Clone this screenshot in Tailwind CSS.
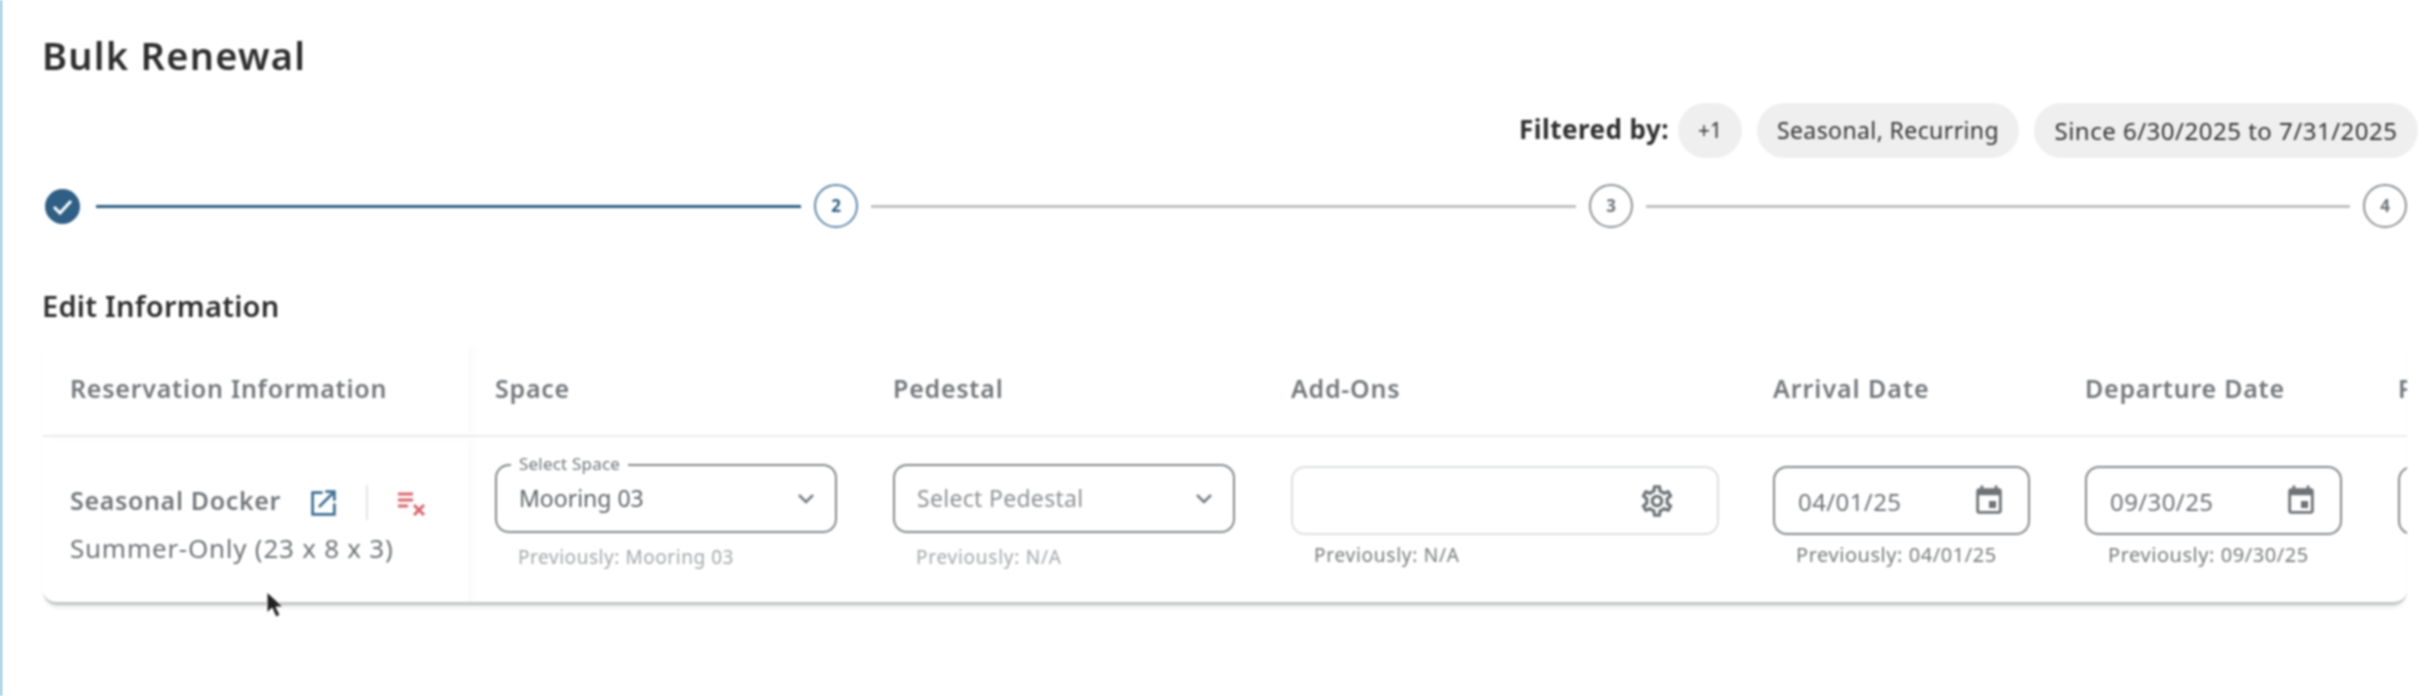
<!DOCTYPE html>
<html lang="en">
<head>
    <meta charset="UTF-8" />
    <title>Bulk Renewal</title>
    <script src="https://cdn.jsdelivr.net/npm/@tailwindcss/browser@4"></script>
</head>
<body class="bg-white overflow-hidden h-[696px] font-['Noto_Sans',sans-serif]">

<div class="relative h-[696px] border-l-2 border-[#7fbcdb] blur-[0.8px]">

    <h1 class="pl-[40px] pt-[30px] h-[103px] text-[38px] leading-[50px] font-semibold tracking-[1.25px] text-[#2e2e2e]">Bulk Renewal</h1>

    <div class="flex items-center justify-end h-[55px] pr-[8px]">
        <span class="text-[26px] font-bold text-[#2e2e2e] tracking-[0.45px] mr-[9px] -mt-[3px]">Filtered by:</span>
        <span class="flex items-center justify-center w-[64px] h-[55px] rounded-full bg-[#efefef] text-[21px] text-[#333] mr-[15px]">+1</span>
        <span class="flex items-center justify-center w-[262px] h-[55px] rounded-full bg-[#efefef] text-[23px] tracking-[0.4px] text-[#333] mr-[15px]">Seasonal, Recurring</span>
        <span class="flex items-center justify-center w-[384px] h-[55px] rounded-full bg-[#efefef] text-[24px] tracking-[0.5px] text-[#333]">Since 6/30/2025 to 7/31/2025</span>
    </div>

    <div class="flex items-center gap-[13px] pl-[43px] mt-[26px] h-[44px]">
        <svg class="w-[35px] h-[35px] mr-[3px]" viewBox="0 0 35 35">
            <circle cx="17.5" cy="17.5" r="17.5" fill="#2f5f85" />
            <path d="M9 18l6 6 11-12" fill="none" stroke="#fff" stroke-width="3" />
        </svg>
        <div class="w-[705px] h-[3px] bg-[#2f5f85]"></div>
        <div class="flex items-center justify-center w-[44px] h-[44px] rounded-full border-2 border-[#5f88a6] text-[17px] font-bold text-[#2f5f85]">2</div>
        <div class="w-[705px] h-[3px] bg-[#c0c0c0]"></div>
        <div class="flex items-center justify-center w-[44px] h-[44px] rounded-full border-2 border-[#8d9094] text-[17px] font-bold text-[#6f7376]">3</div>
        <div class="w-[704px] h-[3px] bg-[#c0c0c0]"></div>
        <div class="flex items-center justify-center w-[44px] h-[44px] rounded-full border-2 border-[#8d9094] text-[17px] font-bold text-[#6f7376]">4</div>
    </div>

    <h2 class="pl-[40px] mt-[60px] h-[57px] text-[29px] leading-[36px] font-semibold tracking-[0.25px] text-[#2e2e2e]">Edit Information</h2>

    <div class="ml-[41px] w-[2364px] h-[260px] overflow-hidden rounded-b-[14px] border-b-[3px] border-[#c4c6c7] shadow-[0_4px_4px_-2px_rgba(0,0,0,0.1)] grid grid-cols-[425px_398px_398px_482px_312px_313px_36px] grid-rows-[92px_167px]">
        <div class="flex items-center pl-[27px] pb-[3px] border-b-2 border-[#ececec] shadow-[5px_0_10px_rgba(0,0,0,0.025)] text-[25px] font-semibold text-[#74787b] tracking-[0.75px]">Reservation Information</div>
        <div class="flex items-center pl-[27px] pb-[3px] border-b-2 border-[#ececec] text-[25px] font-semibold text-[#74787b] tracking-[0.75px]">Space</div>
        <div class="flex items-center pl-[27px] pb-[3px] border-b-2 border-[#ececec] text-[25px] font-semibold text-[#74787b] tracking-[0.75px]">Pedestal</div>
        <div class="flex items-center pl-[27px] pb-[3px] border-b-2 border-[#ececec] text-[25px] font-semibold text-[#74787b] tracking-[0.75px]">Add-Ons</div>
        <div class="flex items-center pl-[27px] pb-[3px] border-b-2 border-[#ececec] text-[25px] font-semibold text-[#74787b] tracking-[0.95px]">Arrival Date</div>
        <div class="flex items-center pl-[27px] pb-[3px] border-b-2 border-[#ececec] text-[25px] font-semibold text-[#74787b] tracking-[0.75px]">Departure Date</div>
        <div class="flex items-center pl-[27px] pb-[3px] border-b-2 border-[#ececec] text-[25px] font-semibold text-[#74787b] overflow-hidden">Price</div>

        <div class="pl-[27px] pt-[45px] shadow-[5px_0_10px_rgba(0,0,0,0.025)]">
            <div class="flex items-center h-[38px]">
                <span class="text-[25px] font-semibold text-[#74787b] tracking-[0.65px]">Seasonal Docker</span>
                <svg class="ml-[28px] mt-[3px] w-[29px] h-[29px]" viewBox="0 0 32 32" fill="none" stroke="#3f6f94" stroke-width="3">
                    <path d="M15 5H4v24h24V17" />
                    <path d="M11 21L27 5M18 4h10v10" />
                </svg>
                <div class="ml-[28px] mt-[3px] w-[2px] h-[35px] bg-[#e4e4e4]"></div>
                <svg class="ml-[29px] mt-[6px] w-[30px] h-[24px]" viewBox="0 0 30 24" fill="none" stroke="#d9666c" stroke-width="3">
                    <path d="M1 2h15M1 8h15M1 14h10" />
                    <path d="M17 13l10 10M27 13L17 23" />
                </svg>
            </div>
            <div class="mt-[9px] text-[26px] text-[#6f7376] tracking-[0.75px]">Summer-Only (23 x 8 x 3)</div>
        </div>

        <div class="pl-[27px] pt-[27px]">
            <div class="relative flex items-center justify-between w-[342px] h-[69px] pl-[22px] pr-[23px] border-2 border-[#85888a] rounded-[14px]">
                <span class="absolute left-[14px] top-[-13px] bg-white px-[8px] text-[17px] leading-[22px] tracking-[0.2px] text-[#6f7376]">Select Space</span>
                <span class="text-[23px] text-[#5f6366]">Mooring 03</span>
                <svg class="w-[20px] h-[12px] -mr-[4px]" viewBox="0 0 20 12" fill="none" stroke="#777b7e" stroke-width="2.5"><path d="M3 2l7 7 7-7" /></svg>
            </div>
            <div class="pl-[23px] mt-[12px] text-[19px] leading-[24px] text-[#a3a6a8] tracking-[0.55px]">Previously: Mooring 03</div>
        </div>

        <div class="pl-[27px] pt-[27px]">
            <div class="flex items-center justify-between w-[342px] h-[69px] pl-[22px] pr-[23px] border-2 border-[#85888a] rounded-[14px]">
                <span class="text-[23px] tracking-[0.3px] text-[#8e9193]">Select Pedestal</span>
                <svg class="w-[20px] h-[12px] -mr-[4px]" viewBox="0 0 20 12" fill="none" stroke="#777b7e" stroke-width="2.5"><path d="M3 2l7 7 7-7" /></svg>
            </div>
            <div class="pl-[23px] mt-[12px] text-[19px] leading-[24px] text-[#a3a6a8] tracking-[0.75px]">Previously: N/A</div>
        </div>

        <div class="pl-[27px] pt-[29px]">
            <div class="flex items-center justify-end w-[428px] h-[69px] pr-[41px] border-2 border-[#dedfe0] rounded-[14px]">
                <svg class="w-[38px] h-[38px]" viewBox="0 0 24 24" fill="#6f7376">
                    <path d="M19.43 12.98c.04-.32.07-.64.07-.98 0-.34-.03-.66-.07-.98l2.11-1.65c.19-.15.24-.42.12-.64l-2-3.46c-.09-.16-.26-.25-.44-.25-.06 0-.12.01-.17.03l-2.49 1c-.52-.4-1.08-.73-1.69-.98l-.38-2.65C14.46 2.18 14.25 2 14 2h-4c-.25 0-.46.18-.49.42l-.38 2.65c-.61.25-1.17.59-1.69.98l-2.49-1c-.06-.02-.12-.03-.18-.03-.17 0-.34.09-.43.25l-2 3.46c-.13.22-.07.49.12.64l2.11 1.65c-.04.32-.07.65-.07.98 0 .33.03.66.07.98l-2.11 1.65c-.19.15-.24.42-.12.64l2 3.46c.09.16.26.25.44.25.06 0 .12-.01.17-.03l2.49-1c.52.4 1.08.73 1.69.98l.38 2.65c.03.24.24.42.49.42h4c.25 0 .46-.18.49-.42l.38-2.65c.61-.25 1.17-.59 1.69-.98l2.49 1c.06.02.12.03.18.03.17 0 .34-.09.43-.25l2-3.46c.12-.22.07-.49-.12-.64l-2.11-1.65zm-1.98-1.71c.04.31.05.52.05.73 0 .21-.02.43-.05.73l-.14 1.13.89.7 1.08.84-.7 1.21-1.27-.51-1.04-.42-.9.68c-.43.32-.84.56-1.25.73l-1.06.43-.16 1.13-.2 1.35h-1.4l-.19-1.35-.16-1.13-1.06-.43c-.43-.18-.83-.41-1.23-.71l-.91-.7-1.06.43-1.27.51-.7-1.21 1.08-.84.89-.7-.14-1.13c-.03-.31-.05-.54-.05-.74s.02-.43.05-.73l.14-1.13-.89-.7-1.08-.84.7-1.21 1.27.51 1.04.42.9-.68c.43-.32.84-.56 1.25-.73l1.06-.43.16-1.13.2-1.35h1.39l.19 1.35.16 1.13 1.06.43c.43.18.83.41 1.23.71l.91.7 1.06-.43 1.27-.51.7 1.21-1.07.85-.89.7.14 1.13zM12 8c-2.21 0-4 1.79-4 4s1.79 4 4 4 4-1.79 4-4-1.79-4-4-4zm0 6c-1.1 0-2-.9-2-2s.9-2 2-2 2 .9 2 2-.9 2-2 2z" />
                </svg>
            </div>
            <div class="pl-[23px] mt-[8px] text-[19px] leading-[24px] text-[#77797b] tracking-[0.75px]">Previously: N/A</div>
        </div>

        <div class="pl-[27px] pt-[29px]">
            <div class="flex items-center justify-between w-[257px] h-[69px] pl-[23px] pr-[22px] border-2 border-[#85888a] rounded-[14px]">
                <span class="text-[24px] tracking-[0.4px] text-[#6f7376] mt-[2px]">04/01/25</span>
                <svg class="w-[34px] h-[34px]" viewBox="0 0 24 24" fill="#6f7376"><path d="M17 12h-5v5h5v-5zM16 1v2H8V1H6v2H5c-1.11 0-1.99.9-1.99 2L3 19c0 1.1.89 2 2 2h14c1.1 0 2-.9 2-2V5c0-1.1-.9-2-2-2h-1V1h-2zm3 18H5V8h14v11z" /></svg>
            </div>
            <div class="pl-[23px] mt-[8px] text-[20px] leading-[24px] text-[#77797b] tracking-[0.55px]">Previously: 04/01/25</div>
        </div>

        <div class="pl-[27px] pt-[29px]">
            <div class="flex items-center justify-between w-[257px] h-[69px] pl-[23px] pr-[22px] border-2 border-[#85888a] rounded-[14px]">
                <span class="text-[24px] tracking-[0.4px] text-[#6f7376] mt-[2px]">09/30/25</span>
                <svg class="w-[34px] h-[34px]" viewBox="0 0 24 24" fill="#6f7376"><path d="M17 12h-5v5h5v-5zM16 1v2H8V1H6v2H5c-1.11 0-1.99.9-1.99 2L3 19c0 1.1.89 2 2 2h14c1.1 0 2-.9 2-2V5c0-1.1-.9-2-2-2h-1V1h-2zm3 18H5V8h14v11z" /></svg>
            </div>
            <div class="pl-[23px] mt-[8px] text-[20px] leading-[24px] text-[#77797b] tracking-[0.55px]">Previously: 09/30/25</div>
        </div>

        <div class="pl-[27px] pt-[29px] overflow-hidden">
            <div class="w-[257px] h-[69px] border-2 border-[#85888a] rounded-[14px]"></div>
        </div>
    </div>

    <svg class="absolute left-[263px] top-[591px] w-[20px] h-[27px]" viewBox="0 0 20 27">
        <path d="M2 1v21l5-5 4 9 4-2-4-8h7z" fill="#222" stroke="#fff" stroke-width="1" />
    </svg>
</div>

</body>
</html>
